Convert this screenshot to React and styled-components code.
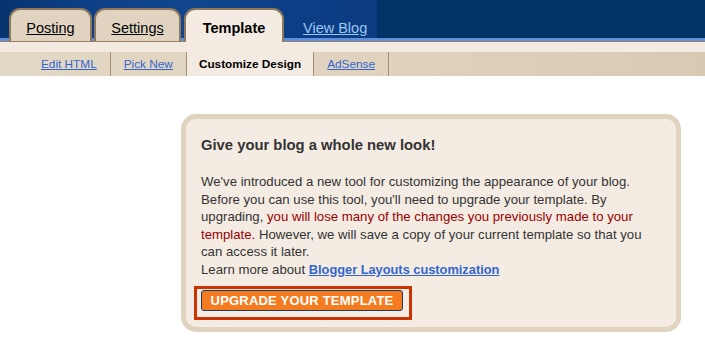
import React from "react";
import styled, { createGlobalStyle } from "styled-components";

const GlobalStyle = createGlobalStyle`
  body {
    margin: 0;
    background: #ffffff;
    font-family: "Liberation Sans", Arial, sans-serif;
  }
`;

const Page = styled.div`
  width: 705px;
  min-height: 353px;
`;

const Header = styled.div`
  height: 42px;
  box-sizing: border-box;
  padding: 8px 0 0 9px;
  display: flex;
  align-items: flex-end;
  background: linear-gradient(
    90deg,
    #08346f 0,
    #0d3f86 12%,
    #11468f 27%,
    #0c3e85 42%,
    #0b3c82 53.4%,
    #003366 53.5%
  );
  box-shadow: inset 0 -3px 0 #5b8fe2;
  border-bottom: 1px solid #9a7f60;
`;

const Tab = styled.a`
  box-sizing: border-box;
  width: ${({ $w }) => $w}px;
  height: ${({ $active }) => ($active ? 34 : 33)}px;
  margin-right: ${({ $gap }) => $gap || 0}px;
  margin-bottom: ${({ $active }) => ($active ? -1 : 0)}px;
  position: relative;
  z-index: ${({ $active }) => ($active ? 1 : 0)};
  padding-top: 10px;
  border: 2px solid #8f785c;
  border-bottom: none;
  border-radius: 11px 11px 0 0;
  background: ${({ $active }) => ($active ? "#f4ece2" : "#e0d4c0")};
  color: #000;
  text-align: center;
  font-size: 14.5px;
  font-weight: ${({ $active }) => ($active ? "bold" : "normal")};
  text-decoration: ${({ $active }) => ($active ? "none" : "underline")};
  line-height: 17px;
`;

const ViewBlog = styled.a`
  margin-left: 19px;
  height: 33px;
  box-sizing: border-box;
  padding-top: 12px;
  color: #9cc6f2;
  font-size: 14.5px;
  line-height: 17px;
  text-decoration: underline;
`;

const SubNav = styled.div`
  display: flex;
  padding: 10px 0 0 28px;
  background: linear-gradient(#f3ebe1, #f3ebe1) top / 100% 10px no-repeat,
    linear-gradient(90deg, #e3d8c5, #ded2bd 60%, #d8c9b3);
`;

const SubTab = styled.a`
  height: 24px;
  padding: 0 ${({ $pad }) => $pad || 13}px;
  display: flex;
  align-items: center;
  border-right: 1px solid #a88f72;
  background: ${({ $active }) => ($active ? "#f3ebe1" : "transparent")};
  color: ${({ $active }) => ($active ? "#000" : "#3366cc")};
  font-size: 11.8px;
  font-weight: ${({ $active }) => ($active ? "bold" : "normal")};
  text-decoration: ${({ $active }) => ($active ? "none" : "underline")};
`;

const Panel = styled.div`
  width: 500px;
  box-sizing: border-box;
  margin: 38px 0 0 181px;
  padding: 17px 15px 7px 15px;
  border: 5px solid #e0d4c0;
  border-radius: 15px;
  background: #f4ece3;
  color: #333;
`;

const Title = styled.h2`
  margin: 0 0 19px;
  font-size: 14.8px;
  line-height: 18px;
  font-weight: bold;
  color: #333;
`;

const Body = styled.p`
  margin: 0;
  font-size: 13.2px;
  line-height: 17.6px;
  white-space: nowrap;
`;

const Warn = styled.span`
  color: #990000;
`;

const LearnLink = styled.a`
  color: #3366cc;
  font-size: 12.8px;
  font-weight: bold;
  text-decoration: underline;
`;

const ButtonFrame = styled.div`
  display: inline-block;
  margin: 7px 0 0 -7px;
  padding: 1px 6px 6px 4px;
  border: 3px solid #cc3300;
`;

const UpgradeButton = styled.button`
  box-sizing: border-box;
  width: 202px;
  height: 21px;
  padding: 0;
  border: 1px solid #1f3a5f;
  border-radius: 3px;
  background: #f47b20;
  color: #fff;
  font-family: "Liberation Sans", Arial, sans-serif;
  font-size: 13px;
  font-weight: bold;
  letter-spacing: 0.2px;
  cursor: pointer;
`;

export default function App() {
  return (
    <Page>
      <GlobalStyle />
      <Header>
        <Tab $w={83} $gap={2}>Posting</Tab>
        <Tab $w={87} $gap={3}>Settings</Tab>
        <Tab $w={100} $active>Template</Tab>
        <ViewBlog>View Blog</ViewBlog>
      </Header>
      <SubNav>
        <SubTab>Edit HTML</SubTab>
        <SubTab>Pick New</SubTab>
        <SubTab $active $pad={12}>Customize Design</SubTab>
        <SubTab>AdSense</SubTab>
      </SubNav>
      <Panel>
        <Title>Give your blog a whole new look!</Title>
        <Body>
          We've introduced a new tool for customizing the appearance of your blog.
          <br />
          Before you can use this tool, you'll need to upgrade your template. By
          <br />
          upgrading, <Warn>you will lose many of the changes you previously made to your</Warn>
          <br />
          <Warn>template.</Warn> However, we will save a copy of your current template so that you
          <br />
          can access it later.
          <br />
          Learn more about <LearnLink>Blogger Layouts customization</LearnLink>
        </Body>
        <ButtonFrame>
          <UpgradeButton>UPGRADE YOUR TEMPLATE</UpgradeButton>
        </ButtonFrame>
      </Panel>
    </Page>
  );
}
